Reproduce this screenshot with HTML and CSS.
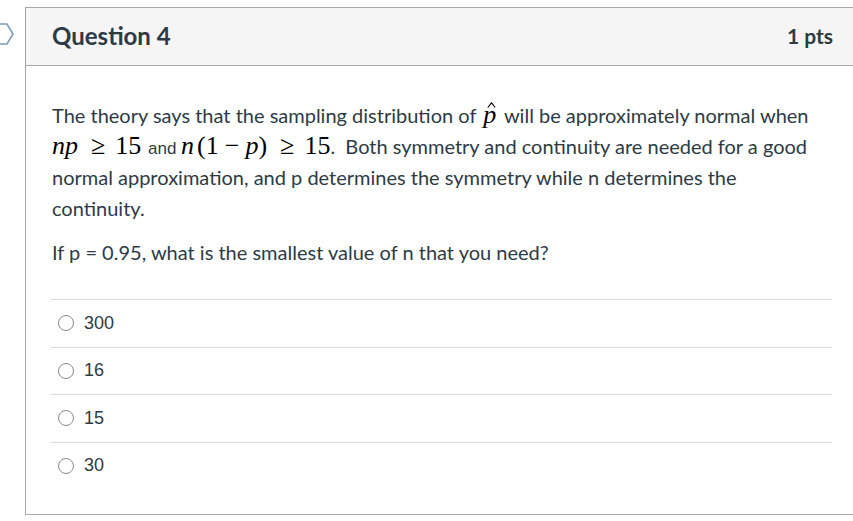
FILE: index.html
```html
<!DOCTYPE html>
<html>
<head>
<meta charset="utf-8">
<link rel="stylesheet" href="styles.css">
</head>
<body>
<svg class="marker" width="16" height="24" viewBox="0 0 16 24"><path d="M-6 2 H7 L13 12 L7 22 H-6" fill="#fff" stroke="#7f9db5" stroke-width="1.6"/></svg>
<div class="card">
  <div class="header">
    <span class="title">Question 4</span>
    <span class="pts">1 pts</span>
  </div>
  <div class="content">
    <p class="text">The theory says that the sampling distribution of <span class="math hatbox"><span class="mi">p</span><svg class="caret" width="9" height="6" viewBox="0 0 9 6"><path d="M0.8 5.5 L4.5 0.8 L8.2 5.5" fill="none" stroke="#000" stroke-width="1.1"/></svg></span> will be approximately normal when <span class="math"><span class="mi">np</span><span class="rel">≥</span><span class="mn">15</span></span><span class="and"> and </span><span class="math"><span class="mi n2">n</span><span class="mn">(1</span><span class="bin">−</span><span class="mi">p</span><span class="mn">)</span><span class="rel">≥</span><span class="mn">15</span></span>.&nbsp; Both symmetry and continuity are needed for a good normal approximation, and p determines the symmetry while n determines the continuity.</p>
    <p class="text q">If p = 0.95, what is the smallest value of n that you need?</p>
    <div class="answers">
      <div class="answer"><span class="radio"></span><span class="label">300</span></div>
      <div class="answer"><span class="radio"></span><span class="label">16</span></div>
      <div class="answer"><span class="radio"></span><span class="label">15</span></div>
      <div class="answer"><span class="radio"></span><span class="label">30</span></div>
    </div>
  </div>
</div>
</body>
</html>
```

FILE: styles.css
```css
html, body {
  margin: 0;
  padding: 0;
  background: #fff;
  overflow: hidden;
}
body {
  width: 853px;
  height: 521px;
  position: relative;
  font-family: Lato, "Liberation Sans", sans-serif;
  color: #2d3b45;
}
.marker {
  position: absolute;
  left: 0;
  top: 22px;
}
.card {
  margin: 7px 0 0 25px;
  width: 840px;
  height: 508px;
  border: 1px solid #a8a8a8;
  box-sizing: border-box;
}
.header {
  height: 58px;
  box-sizing: border-box;
  background: #f5f5f5;
  border-bottom: 1px solid #a8a8a8;
  display: flex;
  align-items: center;
  justify-content: space-between;
  padding: 0 31px 3px 26px;
}
.title {
  font-weight: 700;
  font-size: 24px;
  color: #2d3b45;
}
.pts {
  font-weight: 700;
  font-size: 21px;
  color: #2d3b45;
}
.content {
  padding: 34px 32px 0 25px;
}
.text {
  margin: 0;
  padding-left: 1px;
  font-size: 20px;
  line-height: 31px;
}
.q {
  margin-top: 13px;
}
.math {
  font-family: "Liberation Serif", serif;
  font-size: 26px;
  line-height: 0;
  white-space: nowrap;
  color: #000;
}
.mi {
  font-style: italic;
}
.n2 {
  margin-right: 3px;
}
.rel {
  display: inline-block;
  margin: 0 10px 0 13px;
}
.bin {
  display: inline-block;
  margin: 0 6px;
}
.and {
  font-family: "Liberation Sans", Arial, sans-serif;
  font-size: 17px;
  line-height: 0;
  margin-left: 2px;
}
.hatbox {
  position: relative;
  display: inline-block;
  line-height: 18px;
  margin: 0 3px 0 2px;
}
.caret {
  position: absolute;
  left: 4px;
  top: -4px;
}
.answers {
  margin-top: 31px;
}
.answer {
  border-top: 1px solid #dcdcdc;
  height: 46.5px;
  display: flex;
  align-items: center;
  padding-left: 7px;
}
.radio {
  width: 14px;
  height: 14px;
  border: 1px solid #8a8a8a;
  border-radius: 50%;
  margin-right: 10px;
}
.label {
  font-family: "Liberation Sans", Arial, sans-serif;
  font-size: 18px;
  color: #2d3b45;
}
```
